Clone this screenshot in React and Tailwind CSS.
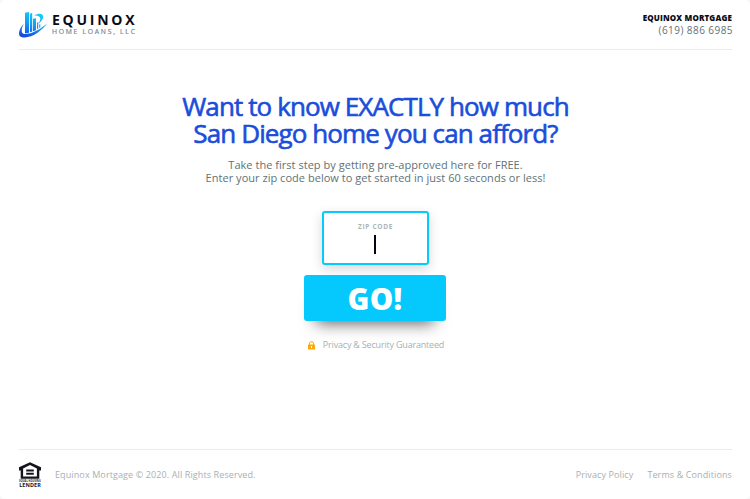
function EquinoxLogo() {
  return (
    <svg className="h-[26px] w-[29px] shrink-0" viewBox="0 0 29 26" fill="none">
      <defs>
        <linearGradient id="eqx" x1="18" y1="0" x2="9" y2="26" gradientUnits="userSpaceOnUse">
          <stop offset="0" stopColor="#14d3f8" />
          <stop offset="0.5" stopColor="#129bf5" />
          <stop offset="1" stopColor="#1647de" />
        </linearGradient>
      </defs>
      <g fill="url(#eqx)">
        <path d="M6 .8 10 0V20.800L6 21.600Z" />
        <path d="M11 1.800 13.200 .8V19.600L11 20.300Z" />
        <path d="M14 6.800 17 6.200V18.200L14 19.300Z" />
        <path d="M18 10.600 19.200 10V16.600L18 17.300ZM20.200 12.600 21.300 12V15.200L20.200 15.900Z" />
        <path d="M5 11.500C1 15.500-.8 20.400.4 23.400 2.600 27 12 25.600 18.600 20.800 22.800 17.600 26.400 14.200 28 11.600 23.600 15.600 18 19 13 20.800 7.500 22.600 3.200 22.400 2.800 19.400 2.400 17.200 3.500 14.200 5 11.500Z" />
        <path d="M15 3.600C19.800 .7 24 1.200 24.200 4.600 24.300 7.200 22 9.700 19.200 12.200 21 9.300 21.900 7 20.900 5.300 19.900 4 17.800 3.500 15 3.600Z" />
      </g>
    </svg>
  );
}

function EqualHousingLogo() {
  return (
    <svg className="h-[26px] w-[22px] shrink-0" viewBox="0 0 22 26">
      <path
        fill="#14141f"
        fillRule="evenodd"
        d="M11 .2 22 5.300V8.600H20.300V16.800H1.700V8.600H0V5.300ZM11 3 4.100 6.400V14.600H17.900V6.400Z"
      />
      <path fill="#14141f" d="M7.200 7.400H14.800V9.400H7.200ZM7.200 10.700H14.800V12.700H7.200Z" />
      <text x="0.200" y="20.300" fontSize="2.500" fontWeight="700" textLength="21.600" lengthAdjust="spacingAndGlyphs" fill="#14141f">
        EQUAL HOUSING
      </text>
      <text x="0.200" y="24.900" fontSize="5.400" fontWeight="700" textLength="21.600" fill="#14141f">
        LENDER
      </text>
    </svg>
  );
}

function LockIcon() {
  return (
    <svg className="h-[9px] w-[7px]" viewBox="0 0 7 9">
      <path d="M1.500 4V2.300a1.500 1.500 0 0 1 1.500-1.500h1a1.500 1.500 0 0 1 1.500 1.500V4" fill="none" stroke="#fda90a" strokeWidth="1" />
      <rect y="3.500" width="7" height="5" rx="0.500" fill="#fda90a" />
      <path d="M3 5h1v2H3z" fill="#fff" />
    </svg>
  );
}

export default function App() {
  return (
    <div className="h-[499px] w-[750px] overflow-hidden bg-[#f6f6f6] font-['Open_Sans',sans-serif]">
      <div className="flex h-full flex-col rounded-[5px] bg-white pr-[18px] pl-[19px] whitespace-nowrap">
        <header className="flex h-[50px] shrink-0 justify-between border-b border-[#ececec]">
          <div className="flex gap-[4px] pt-[12px]">
            <EquinoxLogo />
            <div>
              <div className="text-[14px] leading-[16px] font-bold tracking-[2.750px] text-[#0b0b16]">EQUINOX</div>
              <div className="text-[6.800px] leading-[8px] tracking-[1.720px] text-[#74848a] [-webkit-text-stroke:0.15px]">HOME LOANS, LLC</div>
            </div>
          </div>
          <div className="pt-[12px] text-right">
            <div className="text-[8px] leading-[12px] font-extrabold tracking-[0.150px] text-[#0b0b16]">EQUINOX MORTGAGE</div>
            <div className="-mr-px text-[10px] leading-[13px] tracking-[0.440px] text-[#617277]">(619) 886 6985</div>
          </div>
        </header>

        <main className="mr-px flex flex-1 flex-col items-center pt-[43px]">
          <h1 className="ml-px text-center text-[26px] leading-[27px] font-normal tracking-[-0.900px] text-[#1a4ddb] [-webkit-text-stroke:0.6px_#1a4ddb]">
            Want to know EXACTLY how much
            <br />
            San Diego home you can afford?
          </h1>
          <p className="mt-[11px] ml-px text-center text-[11px] leading-[13px] tracking-[0.030px] text-[#617277]">
            Take the first step by getting pre-approved here for FREE.
            <br />
            Enter your zip code below to get started in just 60 seconds or less!
          </p>
          <div className="mt-[27px] ml-px flex h-[54px] w-[107px] flex-col items-center rounded-[3px] border-2 border-[#05cbfc] bg-white pt-[9px] shadow-[0_4px_12px_rgba(0,0,0,0.16)]">
            <div className="text-[6.500px] leading-[9px] font-bold tracking-[0.700px] text-[#adb5b7]">ZIP CODE</div>
            <div className="mt-[4px] mr-[1px] h-[19px] w-[2px] bg-[#05050f]" />
          </div>
          <button className="mt-[10px] h-[46px] w-[142px] rounded-[3px] bg-[#05c8fd] pt-px text-[29.500px] leading-[45px] font-extrabold tracking-[0.400px] text-white shadow-[0_14px_16px_-12px_rgba(0,0,0,0.65)]">
            GO!
          </button>
          <div className="mt-[17px] ml-[2px] flex items-center gap-[8px] text-[9px] leading-[14px] tracking-[-0.190px] text-[#a8b0b2]">
            <LockIcon />
            <span>Privacy &amp; Security Guaranteed</span>
          </div>
        </main>

        <footer className="flex h-[50px] shrink-0 items-center justify-between border-t border-[#ececec] text-[9px] tracking-[0.110px] text-[#a8b0b2]">
          <div className="flex items-center gap-[14px]">
            <EqualHousingLogo />
            <span>Equinox Mortgage © 2020. All Rights Reserved.</span>
          </div>
          <nav className="flex gap-[14px]">
            <a>Privacy Policy</a>
            <a>Terms &amp; Conditions</a>
          </nav>
        </footer>
      </div>
    </div>
  );
}
